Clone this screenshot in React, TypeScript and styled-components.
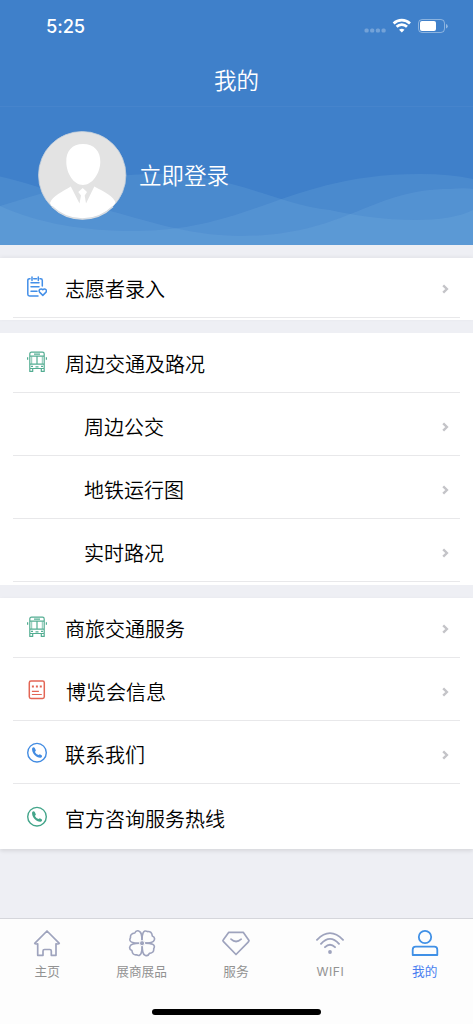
import React from 'react';
import styled, { createGlobalStyle } from 'styled-components';

const GlobalStyle = createGlobalStyle`
  * {
    box-sizing: border-box;
  }
  body {
    margin: 0;
    background: #eeeff4;
    font-family: 'Noto Sans CJK SC', sans-serif;
    color: #111;
  }
`;

const Page = styled.div`
  width: 100%;
  height: 1024px;
  display: flex;
  flex-direction: column;
  overflow: hidden;
  background: #eeeff4;
`;

const Header = styled.header`
  height: 107px;
  background: #3f80ca;
  border-bottom: 1px solid #4684cc;
  color: #fff;
`;

const StatusBar = styled.div`
  height: 53px;
  padding: 0 25px 1px 46px;
  display: flex;
  align-items: center;
  justify-content: space-between;
`;

const Clock = styled.span`
  font: 500 18.3px/22px Inter, sans-serif;
  letter-spacing: -0.1px;
`;

const Title = styled.h1`
  margin: 0;
  height: 53px;
  line-height: 53px;
  font-size: 22.5px;
  font-weight: 350;
  text-align: center;
`;

const Hero = styled.section`
  position: relative;
  height: 138px;
  flex-shrink: 0;
  padding: 0 0 1px 38px;
  display: flex;
  align-items: center;
  background: #3f80ca;
  color: #fff;
`;

const Waves = styled.svg`
  position: absolute;
  inset: 0;
  width: 100%;
  height: 100%;
`;

const Avatar = styled.svg`
  position: relative;
  width: 89px;
  height: 89px;
`;

const LoginText = styled.span`
  position: relative;
  margin: 0 0 4px 12px;
  font-size: 22.5px;
  font-weight: 350;
  line-height: 32px;
`;

const Card = styled.section<{ tail: number; shadow?: string }>`
  margin-top: 13px;
  padding-bottom: ${({ tail }) => tail}px;
  background: #fff;
  box-shadow: ${({ shadow }) => shadow || 'none'};
`;

const Row = styled.div<{ first?: boolean; last?: boolean }>`
  height: ${({ first, last }) => (first ? 60 : last ? 65 : 63)}px;
  margin: 0 13px;
  padding: ${({ first, last }) => (first ? 2 : last ? 4 : 6)}px 11px 0 14px;
  display: flex;
  align-items: center;
  border-bottom: ${({ last }) => (last ? 'none' : '1px solid #e8e8ea')};
`;

const IconBox = styled.span`
  width: 20px;
  height: 22px;
  margin-top: -4px;
  display: flex;
`;

const Label = styled.span<{ indent: number }>`
  flex: 1;
  margin-left: ${({ indent }) => indent}px;
  font-size: 20px;
  font-weight: 350;
  line-height: 28px;
  white-space: nowrap;
  color: #000;
`;

const TabBar = styled.nav`
  height: 106px;
  margin-top: auto;
  display: flex;
  flex-direction: column;
  align-items: center;
  background: #fdfdfd;
  border-top: 1px solid #d5d6db;
`;

const Tabs = styled.div`
  width: 100%;
  height: 90px;
  padding-right: 1px;
  display: grid;
  grid-template-columns: repeat(5, 1fr);
`;

const Tab = styled.div<{ active?: boolean }>`
  padding-top: 10px;
  display: flex;
  flex-direction: column;
  align-items: center;
  color: ${({ active }) => (active ? '#4a7ff0' : '#929292')};
  font-size: 12.7px;
  line-height: 18px;
  svg {
    width: 28px;
    height: 28px;
    margin-bottom: 5px;
    color: ${({ active }) => (active ? '#4090e6' : '#9ea3bd')};
  }
`;

const WifiLabel = styled.span`
  font-family: Inter, sans-serif;
  font-size: 12.2px;
  letter-spacing: 0.5px;
`;

const HomeIndicator = styled.div`
  width: 169px;
  height: 6px;
  border-radius: 3px;
  background: #000;
`;

const StatusIcons = () => (
  <svg width="84" height="16" viewBox="0 0 84 16" fill="none">
    <g fill="#fff" opacity=".27">
      <rect x="0.5" y="10.5" width="4.2" height="4" rx="1.5" />
      <rect x="6.1" y="10.5" width="4.2" height="4" rx="1.5" />
      <rect x="11.8" y="10.5" width="4.2" height="4" rx="1.5" />
      <rect x="17.5" y="10.5" width="4.2" height="4" rx="1.5" />
    </g>
    <g stroke="#fff" strokeWidth="2.7">
      <path d="M29.6 5.4a12 12 0 0 1 16.4 0" />
      <path d="M32.6 8.8a7.4 7.4 0 0 1 10.4 0" />
    </g>
    <path d="M35.1 11.8Q37.8 9.7 40.5 11.8L37.8 14.5Z" fill="#fff" />
    <rect x="54.5" y="1.5" width="26" height="13" rx="3.6" stroke="#fff" opacity=".4" />
    <rect x="56" y="3" width="16" height="10" rx="2" fill="#fff" />
    <path d="M82 6v4.5q1.7-.5 1.7-2.2T82 6Z" fill="#fff" opacity=".45" />
  </svg>
);

const AvatarIcon = () => (
  <Avatar viewBox="0 0 89 89">
    <defs>
      <clipPath id="face">
        <circle cx="44.2" cy="44.2" r="43.5" />
      </clipPath>
    </defs>
    <circle cx="44.2" cy="44.2" r="43.7" fill="#e3e3e3" stroke="#c5cfda" strokeWidth=".8" />
    <g clipPath="url(#face)" fill="#fff">
      <path d="M45 13c11 0 17.5 7 17.3 18C62 43 54 54 45 54S28.500 43 28.300 31C28 20 34 13 45 13Z" />
      <path d="M32.800 55.500 41.500 72.500 43 64.500 40.300 61 44.700 57 49 61 46.700 64.500 48 72.500 56.300 55.500C66 61 76 64.500 78 73L70 89H20L12 72C15 64.500 24 61 32.800 55.500Z" />
    </g>
    <path d="M14 75.500a43.500 43.500 0 0 0 61 0" fill="none" stroke="#d9dde2" strokeWidth="1.600" />
  </Avatar>
);

const HeroWaves = () => (
  <Waves viewBox="0 0 473 138" preserveAspectRatio="none">
    <g fill="#86bce6" fillOpacity=".165">
      <path d="M0 69.500C45 80 88 98 118 106C160 118 195 128.500 240 129C345 129 370 82 450 82Q465 80.500 473 82V138H0Z" />
      <path d="M0 99C40 117 85 124 135 124C250 124 290 67 420 67Q450 67 473 72V138H0Z" />
      <path d="M0 99C55 83 95 67 155 67C235 67 275 97 330 103C370 112 440 120 473 103V138H0Z" />
    </g>
  </Waves>
);

const NotepadIcon = () => (
  <svg width="20" height="22" viewBox="0 0 20 22" fill="none" stroke="#438fe8" strokeWidth="1.5" strokeLinecap="round" strokeLinejoin="round">
    <path d="M3 2.7H2.5Q.8 2.7 .8 4.4V18.3Q.8 20 2.5 20H11M6.700 2.7H9.500M13 2.7H13.700Q15.300 2.7 15.300 4.4V10M5 1V4.5M11.300 1V4.5M4 6.800H12M4 10.800H12M4 15.200H10" />
    <path d="M15.800 19.400 12.800 16.400C11 14.300 13.700 11.400 15.800 13.800C18 11.400 20.600 14.300 18.800 16.400Z" />
  </svg>
);

const BusIcon = () => (
  <svg width="20" height="22" viewBox="0 0 20 22" fill="none" stroke="#53ad92" strokeWidth="1.2" strokeLinejoin="round">
    <path d="M2.800 17.500V3Q2.800 1.200 4.500 1.200H15.500Q17.200 1.200 17.200 3V17.500ZM2.800 13.200H17.200M3 5.200H17M10 5.200V13M7 3.200H13" />
    <path d="M4.700 5.500V13M15.300 5.500V13" strokeWidth=".7" />
    <path d="M.6 6.200V8.700M19.400 6.200V8.700M4 15.300H6M14 15.300H16M8.500 15.800H11.500" />
    <path d="M2.800 18V20.400H5.700V18M14.300 18V20.400H17.200V18" />
  </svg>
);

const DocumentIcon = () => (
  <svg width="20" height="22" viewBox="0 0 20 22" fill="none" stroke="#e36655" strokeWidth="1.5">
    <rect x="2.3" y="2" width="15" height="17.400" rx="1.7" />
    <path d="M4.900 7.500H6.900M8.900 7.500H10.900M12.800 7.500H14.800" strokeWidth="1.800" />
    <path d="M4.900 12.300H11.900M4.900 15.500H14.800" strokeWidth="1.200" />
  </svg>
);

const PhoneIcon = ({ color }: { color: string }) => (
  <svg width="20" height="22" viewBox="0 0 20 22" fill="none">
    <circle cx="10" cy="10.700" r="9.300" stroke={color} strokeWidth="1.400" />
    <path d="M5.200 5.900Q6.900 4.500 7.900 6.200L8.900 8.400 7.900 9.900Q9.200 12.300 11.500 13L12.900 12.200 14.900 13.500Q15.600 14.400 14.300 15.400C11 16.800 3.900 11.500 5.200 5.900Z" fill={color} />
  </svg>
);

const Chevron = () => (
  <svg width="7" height="10" viewBox="0 0 7 10" fill="none" stroke="#c4c4c8" strokeWidth="2.4">
    <path d="m1.2 1.3 3.7 3.7-3.7 3.7" />
  </svg>
);

const HomeIcon = () => (
  <svg viewBox="0 0 28 28" fill="none" stroke="currentColor" strokeWidth="1.7" strokeLinejoin="round" strokeLinecap="round">
    <path d="M1.700 14.300 14 2 26.300 14.300Q26 15.200 23 14.800V26.300H18.300V22Q18.300 20.500 16.800 20.500H11.500Q10 20.500 10 22V26.300H4.700V14.800Q2 15.200 1.700 14.300Z" />
  </svg>
);

// one petal, turned round the centre for the other three
const petal = 'M14 12C14 7 14 3 10.8 2Q8 1 6.8 4Q2 4.5 2.5 8.7C0 13 5 14.3 11.5 14.3';

const CloverIcon = () => (
  <svg viewBox="0 0 28 28" fill="none" stroke="currentColor" strokeWidth="1.6" strokeLinecap="round" strokeLinejoin="round">
    {[0, 90, 180, 270].map(angle => (
      <path key={angle} d={petal} transform={`rotate(${angle} 14.1 14.2)`} />
    ))}
    <circle cx="14.1" cy="14.2" r="2.6" fill="currentColor" stroke="#fdfdfd" strokeWidth="1" />
  </svg>
);

const GemIcon = () => (
  <svg viewBox="0 0 28 28" fill="none" stroke="currentColor" strokeWidth="1.7" strokeLinejoin="round" strokeLinecap="round">
    <path d="M6.800 3.300H21.200L27 11.500Q26.800 12.500 25.700 13.700L14 25.500 1.500 12.700Q.6 11.700 1.200 11Z" />
    <path d="M9 10.200Q14 14.800 19.200 10.200" />
  </svg>
);

const WifiIcon = () => (
  <svg viewBox="0 0 28 28" fill="none" stroke="currentColor" strokeWidth="1.9" strokeLinecap="round">
    <path d="M1 10.800Q14-2.500 27 10.800M5 14.800Q14 5 23 14.800M9 18.200Q14 13.200 19 18.200" />
    <circle cx="14" cy="23" r="1.9" fill="currentColor" stroke="none" />
  </svg>
);

const UserIcon = () => (
  <svg viewBox="0 0 28 28" fill="none" stroke="currentColor" strokeWidth="1.8" strokeLinejoin="round">
    <circle cx="14" cy="8" r="6.2" />
    <path d="M1.700 26V20.700Q1.700 17.700 4.700 17.700H23.300Q26.300 17.700 26.300 20.700V26Z" />
  </svg>
);

type Item = {
  label: string;
  icon?: React.ReactNode;
  indent?: number;
  arrow?: boolean;
};

const groups: Array<{ items: Item[]; tail: number; shadow?: string }> = [
  {
    tail: 2,
    shadow: '0 -1px 4px rgba(0, 0, 0, 0.06)',
    items: [{ label: '志愿者录入', icon: <NotepadIcon />, arrow: true }],
  },
  {
    tail: 3,
    items: [
      { label: '周边交通及路况', icon: <BusIcon /> },
      { label: '周边公交', indent: 57, arrow: true },
      { label: '地铁运行图', indent: 57, arrow: true },
      { label: '实时路况', indent: 57, arrow: true },
    ],
  },
  {
    tail: 0,
    shadow: '0 2px 4px rgba(0, 0, 0, 0.1)',
    items: [
      { label: '商旅交通服务', icon: <BusIcon />, arrow: true },
      { label: '博览会信息', icon: <DocumentIcon />, indent: 19, arrow: true },
      { label: '联系我们', icon: <PhoneIcon color="#438ce2" />, arrow: true },
      { label: '官方咨询服务热线', icon: <PhoneIcon color="#43a58a" /> },
    ],
  },
];

const tabs = [
  { label: '主页', icon: <HomeIcon /> },
  { label: '展商展品', icon: <CloverIcon /> },
  { label: '服务', icon: <GemIcon /> },
  { label: <WifiLabel>WIFI</WifiLabel>, icon: <WifiIcon /> },
  { label: '我的', icon: <UserIcon />, active: true },
];

const App: React.FC = () => (
  <Page>
    <GlobalStyle />
    <Header>
      <StatusBar>
        <Clock>5:25</Clock>
        <StatusIcons />
      </StatusBar>
      <Title>我的</Title>
    </Header>
    <Hero>
      <HeroWaves />
      <AvatarIcon />
      <LoginText>立即登录</LoginText>
    </Hero>
    {groups.map(({ items, tail, shadow }, g) => (
      <Card key={g} tail={tail} shadow={shadow}>
        {items.map(({ label, icon, indent = 18, arrow }, i) => (
          <Row key={label} first={i === 0} last={g === 2 && i === items.length - 1}>
            {icon && <IconBox>{icon}</IconBox>}
            <Label indent={indent}>{label}</Label>
            {arrow && <Chevron />}
          </Row>
        ))}
      </Card>
    ))}
    <TabBar>
      <Tabs>
        {tabs.map(({ label, icon, active }, i) => (
          <Tab key={i} active={active}>
            {icon}
            <span>{label}</span>
          </Tab>
        ))}
      </Tabs>
      <HomeIndicator />
    </TabBar>
  </Page>
);

export default App;
